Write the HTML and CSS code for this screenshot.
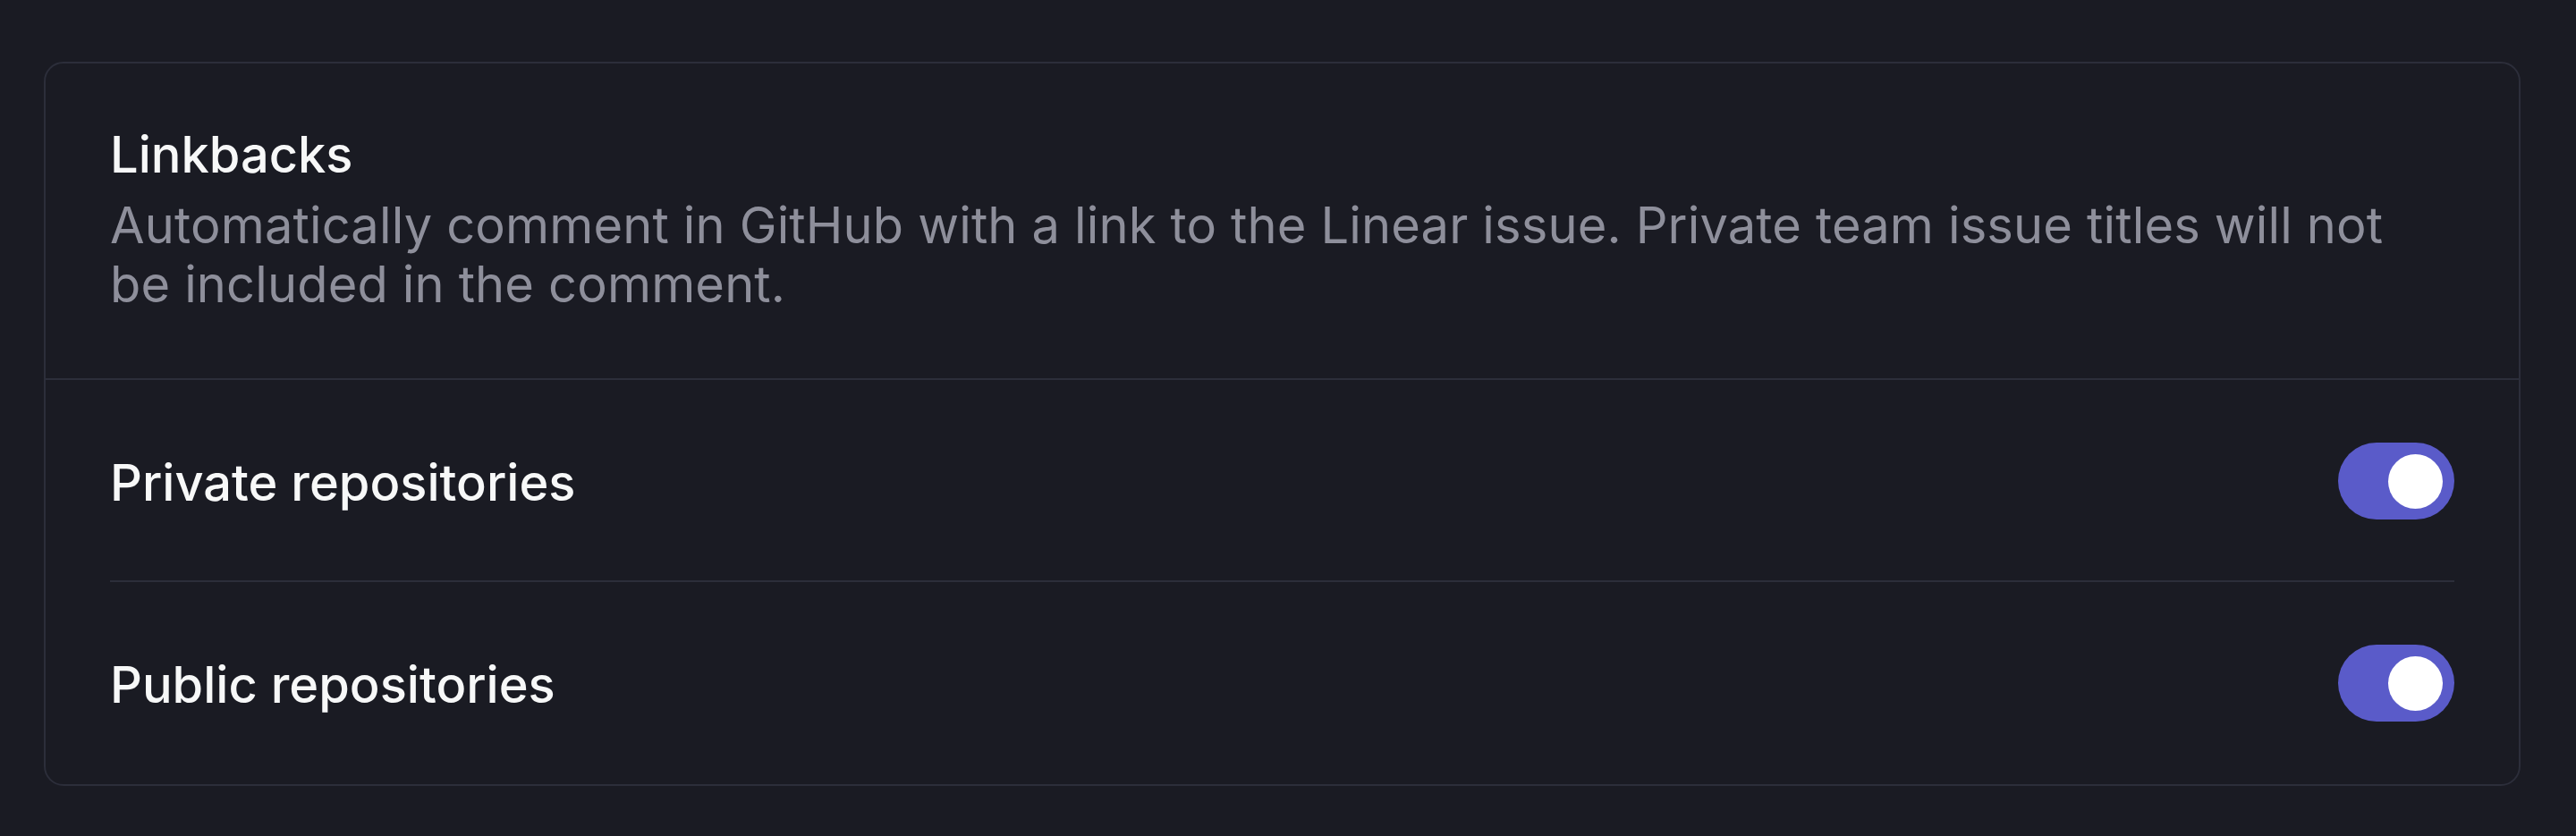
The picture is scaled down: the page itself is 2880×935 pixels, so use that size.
FILE: index.html
```html
<!DOCTYPE html>
<html lang="en">
<head>
<meta charset="utf-8">
<title>Linkbacks</title>
<link rel="stylesheet" href="styles.css">
</head>
<body>
<main class="page">
  <section class="card">
    <header class="card-header">
      <h2 class="card-title">Linkbacks</h2>
      <p class="card-desc">Automatically comment in GitHub with a link to the Linear issue. Private team issue titles will not be included in the comment.</p>
    </header>
    <div class="rows">
      <div class="row">
        <span class="row-label">Private repositories</span>
        <button class="toggle is-on" type="button" aria-pressed="true"><span class="knob"></span></button>
      </div>
      <div class="row">
        <span class="row-label">Public repositories</span>
        <button class="toggle is-on" type="button" aria-pressed="true"><span class="knob"></span></button>
      </div>
    </div>
  </section>
</main>
</body>
</html>
```
FILE: styles.css
```css
html, body {
  margin: 0;
  padding: 0;
  background: #1a1b23;
}

body {
  font-family: Inter, "Noto Sans", sans-serif;
  color: #f7f8f8;
  width: 2880px;
  height: 935px;
  overflow: hidden;
}

.page {
  padding: 69px 62px 0 49px;
}

.card {
  border: 2px solid #2c2e3a;
  border-radius: 22px;
}

.card-header {
  padding: 69px 72px 72px;
  border-bottom: 2px solid #2c2e3a;
}

.card-title {
  margin: 0;
  font-size: 56px;
  line-height: 66px;
  font-weight: 500;
  color: #f7f8f8;
}

.card-desc {
  margin: 13px 0 0;
  font-size: 56px;
  line-height: 66px;
  font-weight: 400;
  letter-spacing: 0.15px;
  color: #8e8f9b;
  max-width: 2580px;
}

.rows {
  padding: 0 72px;
}

.row {
  display: flex;
  align-items: center;
  justify-content: space-between;
  height: 224px;
  border-bottom: 2px solid #2c2e3a;
}

.row:last-child {
  border-bottom: none;
  height: 224px;
  padding-bottom: 2px;
}

.row-label {
  font-size: 56px;
  line-height: 66px;
  font-weight: 500;
  padding-top: 6px;
}

.toggle {
  display: flex;
  align-items: center;
  justify-content: flex-end;
  width: 130px;
  height: 86px;
  padding: 0 13px;
  margin-top: 2px;
  border: none;
  border-radius: 43px;
  background: #5a5bc9;
  cursor: pointer;
}

.knob {
  width: 61px;
  height: 61px;
  border-radius: 50%;
  background: #ffffff;
}
```
